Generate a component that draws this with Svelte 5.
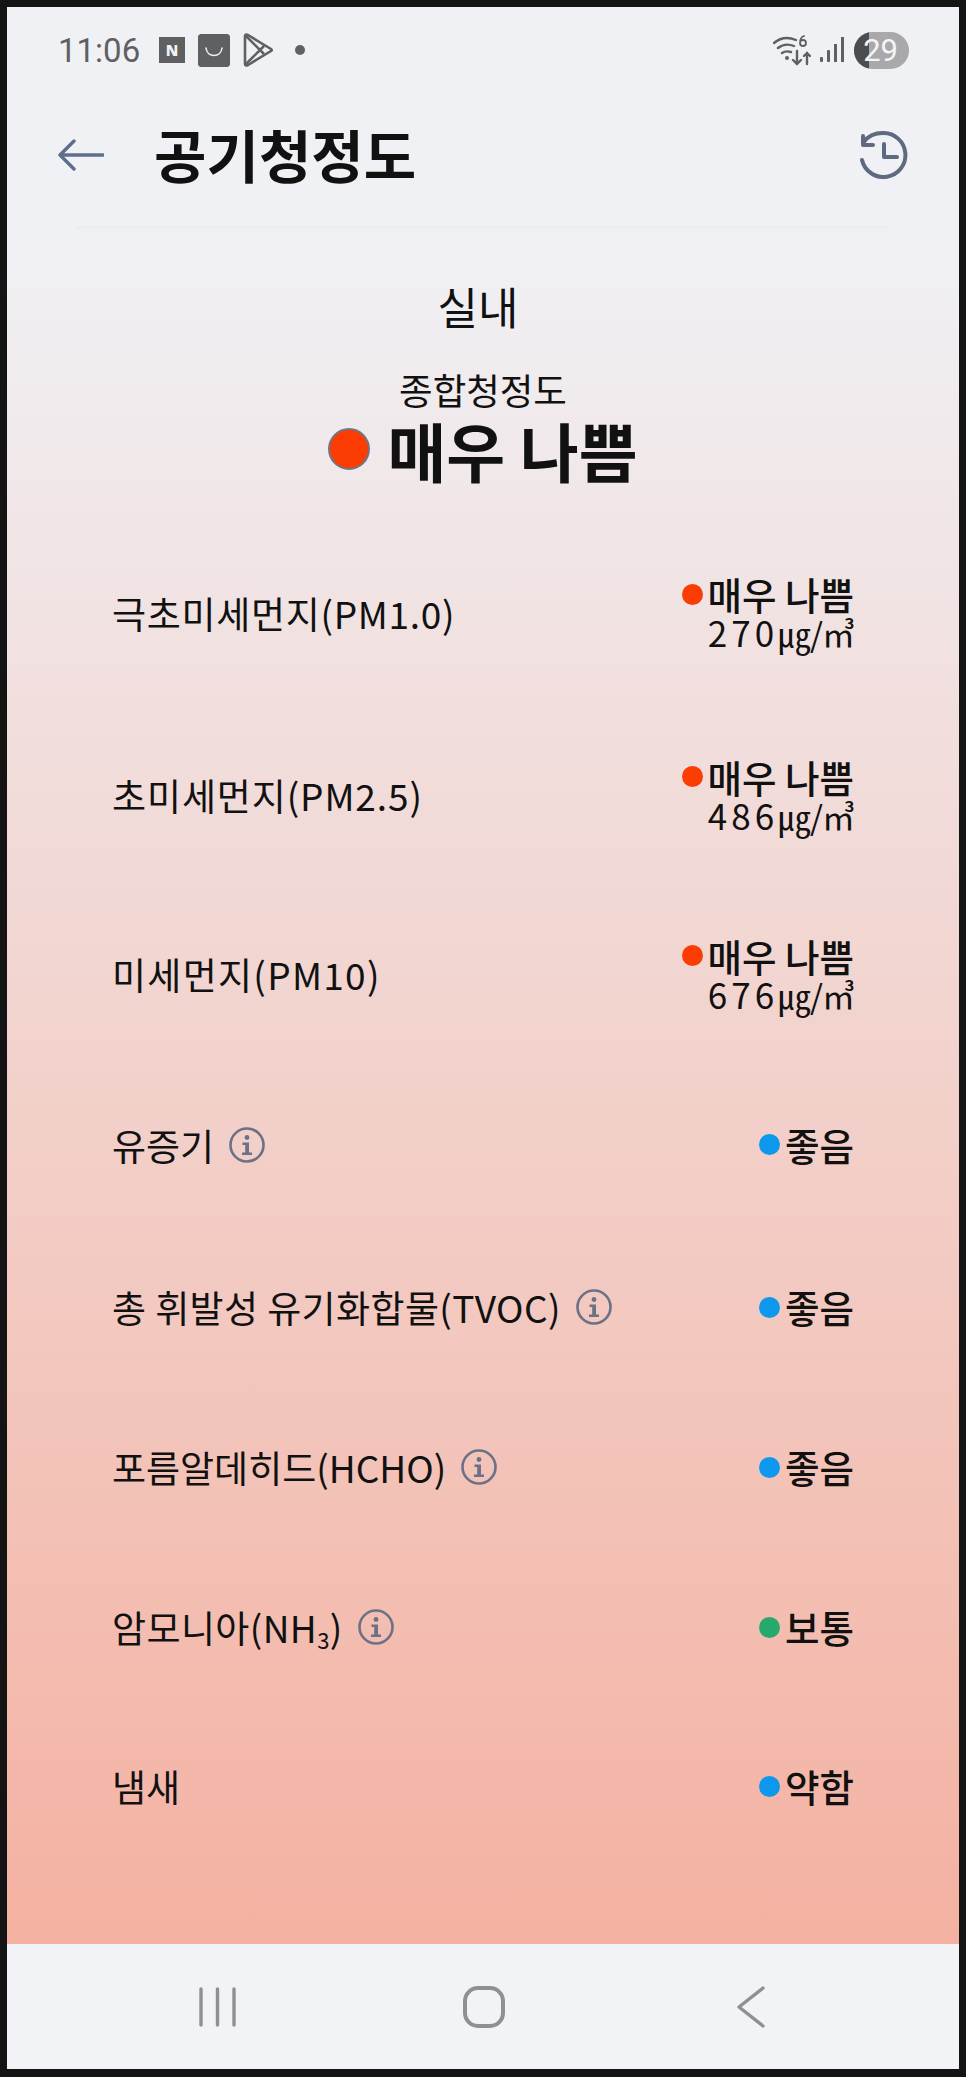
<script>
  const rows = [
    { label: '극초미세먼지(PM1.0)', ls: 0.7, color: 'red', status: '매우 나쁨', value: '270', h: 183 },
    { label: '초미세먼지(PM2.5)', ls: 0.9, color: 'red', status: '매우 나쁨', value: '486', h: 182 },
    { label: '미세먼지(PM10)', ls: 1.3, color: 'red', status: '매우 나쁨', value: '676', h: 176 },
    { label: '유증기', ls: 0, info: true, color: 'blue', status: '좋음', h: 165 },
    { label: '총 휘발성 유기화합물(TVOC)', ls: 0.4, info: true, color: 'blue', status: '좋음', h: 160 },
    { label: '포름알데히드(HCHO)', ls: 0, info: true, color: 'blue', status: '좋음', h: 160 },
    { label: '암모니아(NH', ls: 0.4, sub: '3', after: ')', info: true, color: 'green', status: '보통', h: 160 },
    { label: '냄새', ls: 0, color: 'blue', status: '약함', h: 158 }
  ];
</script>

<div class="phone">
  <div class="statusbar">
    <span class="time">11:06</span>
    <span class="nbox">N</span>
    <svg class="bag" viewBox="0 0 34 34">
      <path d="M3 1h28l2 2v29l-2 2H3l-2-2V3z" fill="#5f6062" />
      <path d="M9 15c1 10 15 10 16 0" fill="none" stroke="#f0f1f5" stroke-width="1.6" stroke-linecap="round" />
    </svg>
    <svg class="play" viewBox="0 0 30 34" fill="none" stroke="#606164" stroke-width="2.6" stroke-linejoin="round">
      <path d="M2 3c0-1 1-2 3-1l23 14c1 .6 1 1.4 0 2L5 32c-2 1-3 0-3-1z" />
      <path d="M3 3l18 18M3 31l18-18" />
    </svg>
    <span class="dot"></span>
    <span class="spacer"></span>
    <svg class="wifi" viewBox="0 0 38 34" fill="none" stroke="#5f6062" stroke-linecap="round">
      <path d="M1 10c7-6 15-6 22-3M5 15c5-4 11-4 16-2M9 20c3-2 6-2 9-1" stroke-width="2.4" />
      <circle cx="14" cy="25" r="2" fill="#5f6062" stroke="none" />
      <path d="M31 3c-3 1-4 4-4 7 0 2 1 3 3 3s3-1 3-3-1-3-3-3-3 1-3 3" stroke-width="1.800" />
      <path d="M24 18v13M20 27l4 4 4-4M34 31V20M31 23l3-3 3 3" stroke-width="2.400" />
    </svg>
    <svg class="signal" viewBox="0 0 24 26" fill="#5f6062">
      <rect x="0" y="20" width="3" height="5" rx="1" />
      <rect x="7" y="13" width="3" height="12" rx="1" />
      <rect x="14" y="7" width="3" height="18" />
      <rect x="21" y="0" width="3" height="25" />
    </svg>
    <div class="battery"><span class="level"></span><span class="pct">29</span></div>
  </div>

  <header>
    <svg class="back" viewBox="0 0 46 32" fill="none" stroke="#5d6f8c" stroke-width="3.4" stroke-linecap="round" stroke-linejoin="round">
      <path d="M45 16H2M16 2L2 16l14 14" />
    </svg>
    <h1>공기청정도</h1>
    <svg class="history" viewBox="0 0 50 48" fill="none" stroke="#5d6a80" stroke-width="4" stroke-linecap="round" stroke-linejoin="round">
      <path d="M5 11c4-6 11-9 19-9a22 22 0 1 1-21 27" />
      <path d="M4 5v9h10" />
      <path d="M25 13v13h13" />
    </svg>
  </header>

  <main>
    <div class="place">실내</div>
    <div class="overall">종합청정도</div>
    <div class="grade"><span class="bigdot"></span>매우 나쁨</div>

    <div class="list">
      {#each rows as row}
        <div class="row" style="height: {row.h}px">
          <div class="label">
            <span style="letter-spacing: {row.ls}px">{row.label}{#if row.sub}<sub>{row.sub}</sub>{row.after}{/if}</span>
            {#if row.info}
              <svg class="info" viewBox="0 0 36 36">
                <circle cx="18" cy="18" r="16.500" fill="none" stroke="#6b7186" stroke-width="2.6" />
                <circle cx="18" cy="10.500" r="2.400" fill="#6b7186" />
                <path d="M13.500 15.500h6.500v10h3v2.500h-10v-2.500h3.200v-7.500h-2.700z" fill="#6b7186" />
              </svg>
            {/if}
          </div>
          <div class="result">
            <div class="status"><span class="sdot {row.color}"></span>{row.status}</div>
            {#if row.value}<div class="value">{row.value}<span class="unit">㎍/㎥</span></div>{/if}
          </div>
        </div>
      {/each}
    </div>
  </main>

  <nav>
    <svg class="recents" viewBox="0 0 37 40" fill="none" stroke="#8f9094" stroke-width="3.400" stroke-linecap="round">
      <path d="M2 2v36M18.500 2v36M35 2v36" />
    </svg>
    <svg class="home" viewBox="0 0 42 42" fill="none" stroke="#8f9094" stroke-width="4">
      <rect x="2" y="2" width="38" height="38" rx="13" />
    </svg>
    <svg class="navback" viewBox="0 0 28 42" fill="none" stroke="#8f9094" stroke-width="3.400" stroke-linecap="round" stroke-linejoin="round">
      <path d="M26 2L2 21l24 19" />
    </svg>
  </nav>
</div>

<style>
  :global(body) {
    margin: 0;
    background: #141414;
  }

  .phone {
    width: 952px;
    height: 2062px;
    margin: 7px 7px 8px;
    display: flex;
    flex-direction: column;
    background: #f0f1f5;
    font-family: 'Noto Sans CJK KR', 'Noto Sans', sans-serif;
    color: #111;
    overflow: hidden;
  }

  .statusbar {
    height: 86px;
    flex: none;
    display: flex;
    align-items: center;
    padding: 0 50px 0 51px;
  }

  .time {
    font: 400 33px/1 Roboto, sans-serif;
    color: #5f6062;
    width: 101px;
  }

  .nbox {
    width: 26px;
    height: 26px;
    background: #5f6062;
    color: #f0f1f5;
    font: 900 15px/26px 'Noto Sans', sans-serif;
    text-align: center;
    margin-right: 12px;
  }

  .bag {
    width: 34px;
    height: 34px;
    margin-right: 12px;
  }

  .play {
    width: 30px;
    height: 34px;
    margin-right: 22px;
  }

  .dot {
    width: 10px;
    height: 10px;
    border-radius: 50%;
    background: #606164;
  }

  .spacer {
    flex: 1;
  }

  .wifi {
    width: 38px;
    height: 34px;
    margin-right: 9px;
  }

  .signal {
    width: 24px;
    height: 26px;
    margin-right: 10px;
  }

  .battery {
    width: 55px;
    height: 37px;
    border-radius: 19px;
    background: #a9a9ab;
    position: relative;
    overflow: hidden;
    color: #f4f4f6;
    font: 400 31px/37px Roboto, sans-serif;
    text-align: right;
    padding-right: 11px;
    box-sizing: border-box;
  }

  .level {
    position: absolute;
    left: 0;
    top: 0;
    bottom: 0;
    width: 15px;
    background: #4c4d4f;
  }

  .pct {
    position: relative;
  }

  header {
    height: 136px;
    flex: none;
    box-sizing: border-box;
    padding: 0 50px 12px 51px;
    display: flex;
    align-items: center;
    position: relative;
    z-index: 1;
  }

  header::after {
    content: '';
    position: absolute;
    left: 70px;
    right: 70px;
    bottom: 0;
    height: 3px;
    background: rgba(120, 120, 130, 0.03);
  }

  .back {
    width: 46px;
    height: 32px;
  }

  h1 {
    flex: 1;
    margin: -4px 0 0 50px;
    font-size: 57px;
    line-height: 1;
    font-weight: 700;
  }

  .history {
    width: 50px;
    height: 48px;
  }

  main {
    flex: 1;
    background: linear-gradient(180deg, #f0f1f5 0%, #f4b1a1 100%);
    display: flex;
    flex-direction: column;
    align-items: center;
  }

  .place {
    font-size: 44px;
    line-height: 60px;
    margin: 47px 10px 0 0;
  }

  .overall {
    font-size: 36.500px;
    line-height: 44px;
    margin-top: 32px;
  }

  .grade {
    display: flex;
    align-items: center;
    font-size: 64px;
    font-weight: 700;
    line-height: 72px;
    margin: 1px 0 0 0;
  }

  .bigdot {
    width: 42px;
    height: 42px;
    box-sizing: border-box;
    border: 2px solid #6f7688;
    border-radius: 50%;
    background: #fb3c03;
    margin-right: 17px;
  }

  .list {
    width: 100%;
    box-sizing: border-box;
    padding: 0 105px 0 105px;
    margin-top: 36px;
  }

  .row {
    display: flex;
    justify-content: space-between;
    align-items: center;
  }

  .label {
    display: flex;
    align-items: center;
    gap: 15px;
    font-size: 37px;
    line-height: 62px;
  }

  sub {
    font-size: 22px;
    line-height: 0;
    vertical-align: -6px;
  }

  .info {
    width: 36px;
    height: 36px;
  }

  .result {
    display: flex;
    flex-direction: column;
    align-items: flex-end;
  }

  .status {
    display: flex;
    align-items: center;
    gap: 5px;
    font-size: 37.500px;
    font-weight: 500;
    line-height: 40px;
  }

  .value {
    font-size: 35px;
    line-height: 36px;
    letter-spacing: 4px;
  }

  .unit {
    font-size: 33px;
    letter-spacing: -1px;
  }

  .sdot {
    width: 21px;
    height: 21px;
    border-radius: 50%;
  }

  .red { background: #fb3c03; }
  .blue { background: #0d98ee; }
  .green { background: #27a96c; }

  nav {
    height: 125px;
    flex: none;
    background: #f2f3f7;
    display: flex;
    align-items: center;
  }

  .recents {
    width: 37px;
    height: 40px;
    margin-left: 192px;
  }

  .home {
    width: 42px;
    height: 42px;
    margin-left: 227px;
  }

  .navback {
    width: 28px;
    height: 42px;
    margin-left: 232px;
  }
</style>
